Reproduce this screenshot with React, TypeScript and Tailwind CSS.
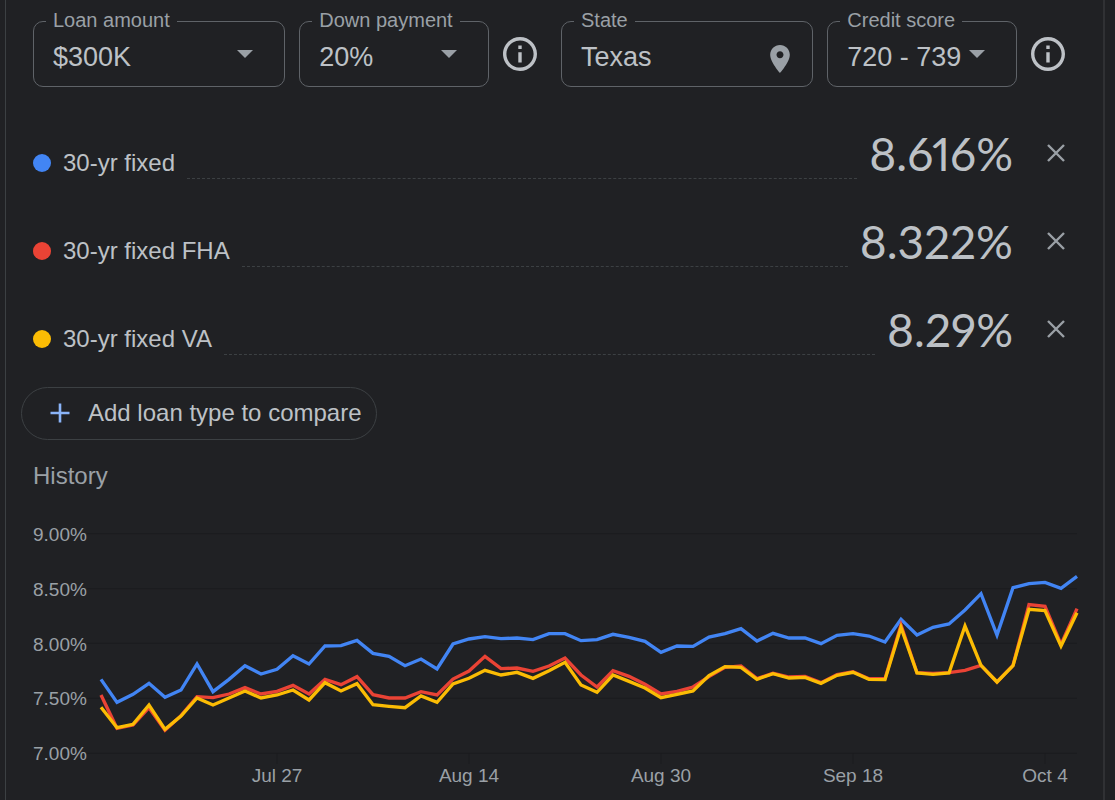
import { useState } from 'react';
import type { ReactNode } from 'react';

const InfoIcon = () => (
  <svg viewBox="2 2 20 20" className="h-[34px] w-[34px]" fill="currentColor" aria-hidden="true">
    <path d="M11 7h2v2h-2zm0 4h2v6h-2zm1-9C6.48 2 2 6.48 2 12s4.48 10 10 10 10-4.48 10-10S17.52 2 12 2zm0 18c-4.41 0-8-3.59-8-8s3.59-8 8-8 8 3.59 8 8-3.59 8-8 8z" />
  </svg>
);

const PinIcon = () => (
  <svg viewBox="5 2 14 20" className="h-7 w-5" fill="currentColor" aria-hidden="true">
    <path d="M12 2C8.13 2 5 5.13 5 9c0 5.25 7 13 7 13s7-7.75 7-13c0-3.87-3.13-7-7-7zm0 9.5c-1.38 0-2.5-1.12-2.5-2.5s1.12-2.5 2.5-2.5 2.5 1.12 2.5 2.5-1.12 2.5-2.5 2.5z" />
  </svg>
);

const CaretIcon = () => (
  <svg viewBox="0 0 16 8" className="h-2 w-4" fill="currentColor" aria-hidden="true">
    <path d="M0 0h16L8 8z" />
  </svg>
);

const CloseIcon = () => (
  <svg viewBox="0 0 18 18" className="h-[18px] w-[18px]" stroke="currentColor" strokeWidth="2.4" aria-hidden="true">
    <path d="M1 1l16 16M17 1L1 17" />
  </svg>
);

const PlusIcon = () => (
  <svg viewBox="0 0 20 20" className="h-5 w-5" stroke="currentColor" strokeWidth="2.6" aria-hidden="true">
    <path d="M10 .5v19M.5 10h19" />
  </svg>
);

const initialLoans = [
  { name: '30-yr fixed', rate: '8.616%', dot: 'bg-[#4285f4]' },
  { name: '30-yr fixed FHA', rate: '8.322%', dot: 'bg-[#ea4335]' },
  { name: '30-yr fixed VA', rate: '8.29%', dot: 'bg-[#fbbc04]' },
];

// One entry per data point, in chart units: 71 is 9.00%, 730 is 7.00%
const fixed = [
  508, 577, 553, 520, 562, 540, 462, 545, 508, 467, 492, 478, 437, 462, 408, 407,
  391, 430, 439, 467, 447, 477, 402, 387, 380, 386, 384, 389, 371, 371, 392, 389,
  373, 382, 394, 427, 408, 409, 381, 371, 356, 393, 370, 384, 384, 401, 376, 371,
  378, 396, 328, 375, 352, 342, 300, 251, 375, 233, 221, 217, 235, 199,
];

const fha = [
  555, 655, 645, 593, 661, 617, 560, 563, 552, 533, 552, 544, 526, 552, 508, 524,
  500, 554, 564, 564, 545, 555, 507, 483, 439, 476, 474, 484, 468, 444, 495, 531,
  482, 499, 523, 552, 544, 531, 500, 472, 468, 506, 490, 501, 499, 518, 494, 485,
  506, 506, 345, 488, 490, 488, 481, 466, 516, 466, 284, 289, 403, 296,
];

const va = [
  592, 653, 643, 585, 658, 618, 564, 585, 564, 543, 564, 555, 540, 570, 518, 543,
  521, 584, 589, 593, 558, 577, 522, 505, 481, 495, 487, 505, 482, 457, 525, 547,
  495, 514, 534, 563, 553, 543, 497, 470, 472, 508, 491, 504, 502, 520, 496, 487,
  508, 509, 352, 489, 493, 489, 348, 466, 516, 467, 298, 302, 408, 308,
];

const series = [
  { color: '#4285f4', values: fixed },
  { color: '#ea4335', values: fha },
  { color: '#fbbc04', values: va },
];

const yLabels = ['9.00%', '8.50%', '8.00%', '7.50%', '7.00%'];
const gridLines = [71, 236, 400, 565, 730];
const ticks = [11, 23, 35, 47, 59];

const xLabels = [
  { text: 'Jul 27', column: 'col-start-10' },
  { text: 'Aug 14', column: 'col-start-22' },
  { text: 'Aug 30', column: 'col-start-34' },
  { text: 'Sep 18', column: 'col-start-46' },
  { text: 'Oct 4', column: 'col-start-58' },
];

const STEP = 48;

const toPoints = (values: number[]) => values.map((y, i) => `${i * STEP},${y}`).join(' ');

const Field = ({ id, label, grow, children }: { id: string; label: string; grow: string; children: ReactNode }) => (
  <div className={`relative h-[66px] min-w-0 rounded-[10px] border border-[#5f6368] ${grow}`}>
    <label htmlFor={id} className="absolute -top-3 left-3 bg-[#202124] px-[7px] text-[20px] leading-5 whitespace-nowrap text-[#9aa0a6]">
      {label}
    </label>
    {children}
  </div>
);

const controlClass =
  'h-full w-full appearance-none bg-transparent pt-[6px] pl-[19px] text-[27px] text-[#bdc1c6] outline-none';

const SelectField = ({ id, label, grow, options }: { id: string; label: string; grow: string; options: string[] }) => (
  <Field id={id} label={label} grow={grow}>
    <select id={id} className={controlClass}>
      {options.map((option) => (
        <option key={option}>{option}</option>
      ))}
    </select>
    <span className="pointer-events-none absolute inset-y-0 right-[31px] flex items-center text-[#9aa0a6]">
      <CaretIcon />
    </span>
  </Field>
);

const InfoButton = ({ label }: { label: string }) => (
  <button type="button" aria-label={label} className="shrink-0 text-[#bdc1c6]">
    <InfoIcon />
  </button>
);

const History = () => (
  <section className="mt-[22px]">
    <h2 className="text-[24px] leading-7 text-[#9aa0a6]">History</h2>
    <div className="-mr-3 mt-5 flex text-[19px] leading-6 text-[#9aa0a6]">
      <div className="flex h-[256px] w-[68px] shrink-0 flex-col justify-between pt-[13px]">
        {yLabels.map((label) => (
          <span key={label}>{label}</span>
        ))}
      </div>
      <div className="min-w-0 flex-1">
        <svg viewBox="0 0 2928 762" preserveAspectRatio="none" className="block h-[254px] w-full overflow-visible" role="img" aria-label="Rate history">
          {gridLines.map((y) => (
            <line key={y} x1="-42" x2="2928" y1={y} y2={y} stroke="#1b1c1f" strokeWidth="3" />
          ))}
          {ticks.map((t) => (
            <line key={t} x1={t * STEP} x2={t * STEP} y1="730" y2="762" stroke="#1b1c1f" strokeWidth="3" />
          ))}
          {series.map((s) => (
            <polyline
              key={s.color}
              points={toPoints(s.values)}
              fill="none"
              stroke={s.color}
              strokeWidth="10"
              strokeMiterlimit="10"
            />
          ))}
        </svg>
        <div className="grid grid-cols-[repeat(61,minmax(0,1fr))]">
          {xLabels.map((label) => (
            <span key={label.text} className={`col-span-4 flex justify-center whitespace-nowrap ${label.column}`}>
              {label.text}
            </span>
          ))}
        </div>
      </div>
    </div>
  </section>
);

const App = () => {
  const [loans, setLoans] = useState(initialLoans);

  return (
    <div className="min-h-screen bg-[#202124] pr-[10px] pl-[5px] font-['Liberation_Sans',Arial,sans-serif]">
      <main className="min-h-screen border-r-2 border-l border-r-[#303134] border-l-[#3c4043] pt-[21px] pr-[38px] pl-[27px]">
        <form className="flex gap-6">
          <div className="flex flex-1 items-center gap-[14px]">
            <SelectField id="amount" label="Loan amount" grow="flex-4" options={['$300K', '$400K', '$500K']} />
            <SelectField id="down" label="Down payment" grow="flex-3" options={['20%', '10%', '5%']} />
            <InfoButton label="About down payment" />
          </div>
          <div className="flex flex-1 items-center gap-[14px]">
            <Field id="state" label="State" grow="flex-4">
              <input id="state" type="text" defaultValue="Texas" className={controlClass} />
              <span className="pointer-events-none absolute top-[23px] right-[22px] text-[#9aa0a6]">
                <PinIcon />
              </span>
            </Field>
            <SelectField id="score" label="Credit score" grow="flex-3" options={['720 - 739', '740+', '700 - 719']} />
            <InfoButton label="About credit score" />
          </div>
        </form>

        <ul className="mt-8">
          {loans.map((loan) => (
            <li key={loan.name} className="flex h-[88px] items-center">
              <span className={`h-[18px] w-[18px] shrink-0 rounded-full ${loan.dot}`}></span>
              <span className="ml-3 text-[24px] leading-8 whitespace-nowrap text-[#bdc1c6]">{loan.name}</span>
              <span className="mx-3 h-8 flex-1 border-b border-dashed border-[#3c4043]"></span>
              <span className="pb-[18px] font-['Lato',sans-serif] text-[46px] leading-[56px] proportional-nums text-[#bdc1c6]">
                {loan.rate}
              </span>
              <button
                type="button"
                aria-label={`Remove ${loan.name}`}
                className="mb-5 ml-[34px] text-[#9aa0a6]"
                onClick={() => setLoans(loans.filter((l) => l !== loan))}
              >
                <CloseIcon />
              </button>
            </li>
          ))}
        </ul>

        <button
          type="button"
          className="mt-1 -ml-3 flex h-[53px] items-center gap-[18px] rounded-full border border-[#3c4043] pr-[14px] pb-px pl-7 text-[24px] whitespace-nowrap text-[#bdc1c6]"
        >
          <span className="text-[#8ab4f8]">
            <PlusIcon />
          </span>
          Add loan type to compare
        </button>

        <History />
      </main>
    </div>
  );
};

export default App;
